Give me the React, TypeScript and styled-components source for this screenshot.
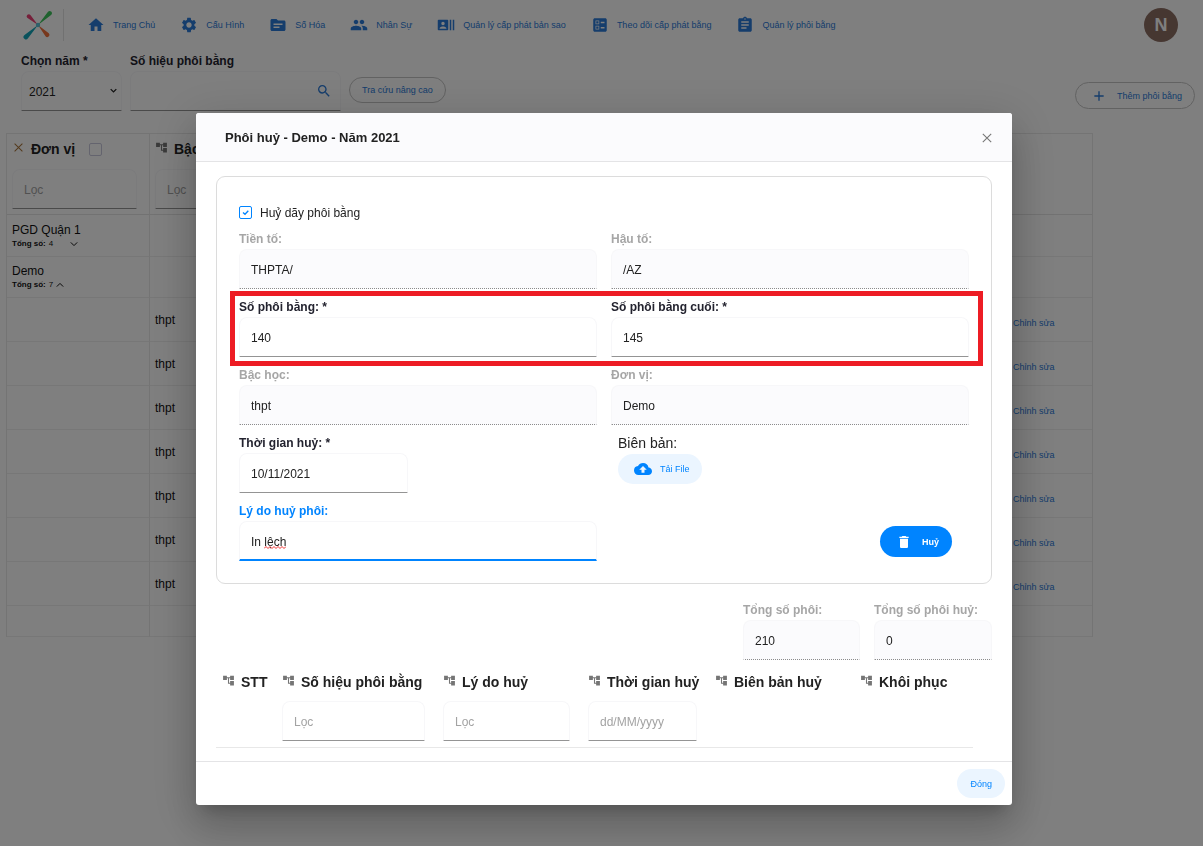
import React from "react";
import styled, { createGlobalStyle, css } from "styled-components";
import {
  MdAccountTree,
  MdAdd,
  MdAssignment,
  MdBackup,
  MdBallot,
  MdDelete,
  MdHome,
  MdPeople,
  MdRecentActors,
  MdSearch,
  MdSettings,
  MdSource,
} from "react-icons/md";

const blue = "#0084ff";
const navBlue = "#2a7ad8";

const GlobalStyle = createGlobalStyle`
  *, *::before, *::after { box-sizing: border-box; }
  body {
    margin: 0;
    background: #fff;
    color: #222;
    font-family: "Liberation Sans", Arial, sans-serif;
    font-size: 12px;
    line-height: 16px;
  }
  button, input, select { font: inherit; color: inherit; margin: 0; }
  a { text-decoration: none; }
`;

/* ---------- shared parts ---------- */

const Field = styled.div<{ $width?: number }>`
  display: flex;
  flex-direction: column;
  gap: 1px;
  min-width: 0;
  width: ${(p) => (p.$width ? `${p.$width}px` : "auto")};
`;

const Label = styled.label<{ $tone?: "muted" | "active" }>`
  font-weight: bold;
  line-height: 18px;
  white-space: nowrap;
  color: ${(p) => (p.$tone === "muted" ? "#a6a6a6" : p.$tone === "active" ? blue : "#23232f")};
`;

const control = css`
  display: block;
  width: 100%;
  height: 40px;
  padding: 2px 11px 0;
  background: #fff;
  border: 1px solid #f7f7f9;
  border-bottom-color: #949494;
  border-radius: 8px 8px 0 0;
  outline: none;
`;

const TextInput = styled.input<{ $active?: boolean }>`
  ${control}
  &::placeholder { color: #a3a3a3; opacity: 1; }
  &:disabled {
    background: #fbfbfd;
    border-bottom: 1px dotted #8c8c8c;
    color: #222;
  }
  ${(p) => p.$active && css`border-bottom: 2px solid ${blue};`}
`;

const Pill = styled.button<{ $kind: "outline" | "soft" | "solid"; $size: number }>`
  display: inline-flex;
  align-items: center;
  justify-content: center;
  height: ${(p) => p.$size}px;
  border-radius: 16px;
  font-size: 9px;
  line-height: 12px;
  white-space: nowrap;
  cursor: pointer;
  ${(p) =>
    p.$kind === "outline"
      ? css`background: transparent; border: 1px solid #c4c4c4; color: ${navBlue}; padding: 0 12px;`
      : p.$kind === "soft"
      ? css`background: #ebf5ff; border: 0; color: ${blue}; padding: 0 12px;`
      : css`background: ${blue}; border: 0; color: #fff; font-weight: bold; padding: 0 13px 0 16px;`}
`;

/* ---------- page behind the dialog ---------- */

const TopBar = styled.header`
  display: flex;
  align-items: center;
  height: 49px;
  padding: 0 25px 0 23px;
`;

const LogoSlot = styled.a`
  display: flex;
  padding-right: 10px;
  height: 32px;
  border-right: 1px solid #e2e2e2;
`;

const Nav = styled.nav`
  display: flex;
  flex: 1;
  gap: 25px;
  padding-left: 23px;
`;

const NavLink = styled.a`
  display: flex;
  align-items: center;
  gap: 8px;
  font-size: 9px;
  color: ${navBlue};
  white-space: nowrap;
  svg { flex: none; width: 18px; height: 18px; }
`;

const Avatar = styled.button`
  width: 34px;
  height: 34px;
  padding: 0;
  border: 0;
  border-radius: 50%;
  background: #8d6e63;
  color: #fff;
  font-size: 18px;
  font-weight: bold;
`;

const Filters = styled.form`
  display: flex;
  align-items: flex-start;
  gap: 8px;
  padding: 3px 8px 0 21px;
`;

const Select = styled.select`
  ${control}
  appearance: none;
  padding: 2px 7px 0;
`;

const ControlBox = styled.div`
  position: relative;
  > svg { position: absolute; pointer-events: none; }
`;

const PillSlot = styled.div<{ $end?: boolean }>`
  display: flex;
  margin-left: ${(p) => (p.$end ? "auto" : "0")};
  padding-top: ${(p) => (p.$end ? "30px" : "25px")};
  svg { width: 16px; height: 16px; margin: 0 10px 0 3px; }
`;

const UnitTable = styled.table`
  width: calc(100% - 116px);
  margin: 22px 0 0 6px;
  border-collapse: separate;
  border-spacing: 0;
  table-layout: fixed;
  border: 1px solid #e8e8e8;
  border-width: 1px 1px 0 1px;
  th, td {
    padding: 0 6px 0 5px;
    border-bottom: 1px solid #efefef;
    text-align: left;
    font-weight: normal;
  }
  th { border-bottom-color: #e4e4e4; }
  th:first-child, td:first-child { border-right: 1px solid #e8e8e8; }
  thead th { height: 81px; vertical-align: top; padding-top: 6px; padding-right: 12px; }
`;

const UnitRow = styled.tr<{ $height: number }>`
  td { height: ${(p) => p.$height}px; color: #111; }
`;

const ColTitle = styled.div<{ $gap: number }>`
  display: flex;
  align-items: center;
  gap: 6px;
  height: 18px;
  margin-bottom: ${(p) => p.$gap}px;
  font-size: 14px;
  font-weight: bold;
  line-height: 18px;
  white-space: nowrap;
  color: #222;
  svg { flex: none; width: 13px; height: 13px; color: #757575; margin-bottom: 4px; }
`;

const Tick = styled.input`
  appearance: none;
  flex: none;
  width: 13px;
  height: 13px;
  margin: 0;
  border: 1px solid #c9c9dd;
  border-radius: 2px;
  background: #fff;
  &:checked { border-color: ${blue}; }
`;

const TitleTick = styled(Tick)`
  margin-left: 8px;
`;

const UnitName = styled.div`
  line-height: 16px;
`;

const UnitTotal = styled.div<{ $open?: boolean }>`
  display: flex;
  align-items: center;
  font-size: 8px;
  line-height: 12px;
  gap: 3px;
  svg { width: 8px; height: 8px; margin-left: ${(p) => (p.$open ? "0" : "14px")}; }
`;

const RowLink = styled.a`
  display: block;
  padding-top: 6px;
  font-size: 9px;
  color: ${navBlue};
`;

/* ---------- dialog ---------- */

const Overlay = styled.div`
  position: fixed;
  inset: 0;
  display: flex;
  justify-content: center;
  align-items: flex-start;
  padding: 113px 0 0 5px;
  background: rgba(0, 0, 0, 0.5);
  overflow: auto;
`;

const Dialog = styled.section`
  width: 816px;
  max-width: 96%;
  background: #fff;
  border-radius: 3px;
  overflow: hidden;
  box-shadow: 0 11px 15px -7px rgba(0, 0, 0, 0.2), 0 24px 38px 3px rgba(0, 0, 0, 0.14),
    0 9px 46px 8px rgba(0, 0, 0, 0.12);
`;

const DialogHead = styled.header`
  display: flex;
  align-items: center;
  justify-content: space-between;
  height: 49px;
  padding: 2px 17px 0 29px;
  background: #fbfbfd;
  border-bottom: 1px solid #e4e4e6;
`;

const DialogTitle = styled.h2`
  margin: 0;
  font-size: 13px;
  line-height: 18px;
`;

const IconButton = styled.button`
  display: flex;
  padding: 3px;
  border: 0;
  background: none;
  color: #777;
`;

const DialogBody = styled.div`
  padding: 14px 20px 13px;
`;

const Panel = styled.form`
  display: flex;
  flex-direction: column;
  gap: 9px;
  padding: 27px 22px 22px;
  border: 1px solid #dcdcdc;
  border-radius: 9px;
`;

const CheckRow = styled.label`
  display: flex;
  align-items: center;
  gap: 8px;
  height: 17px;
`;

const CheckMark = styled.span`
  position: relative;
  display: flex;
  svg { position: absolute; inset: 0; pointer-events: none; }
`;

const PairRow = styled.div<{ $marked?: boolean }>`
  position: relative;
  display: grid;
  grid-template-columns: 1fr 1fr;
  gap: 14px;
  ${(p) =>
    p.$marked &&
    css`
      &::after {
        content: "";
        position: absolute;
        inset: -7px -14px -9px -9px;
        border: 5px solid #ed1c24;
        pointer-events: none;
      }
    `}
`;

const UploadGroup = styled.div`
  display: flex;
  flex-direction: column;
  align-items: flex-start;
  gap: 2px;
  padding-left: 7px;
  svg { width: 18px; height: 18px; margin: 0 8px 0 4px; }
`;

const UploadLabel = styled.div`
  font-size: 14px;
  line-height: 18px;
`;

const SubmitSlot = styled.div`
  display: flex;
  justify-content: flex-end;
  align-items: flex-end;
  padding: 0 17px 4px 0;
  svg { width: 16px; height: 16px; margin-right: 10px; }
`;

const Totals = styled.div`
  display: flex;
  justify-content: flex-end;
  gap: 14px;
  padding-top: 17px;
`;

const CancelTable = styled.table`
  width: 757px;
  max-width: 100%;
  margin-top: 13px;
  border-collapse: separate;
  border-spacing: 0;
  table-layout: fixed;
  th {
    padding: 0 12px 6px 6px;
    vertical-align: top;
    text-align: left;
    font-weight: normal;
    border-bottom: 1px solid #e8e8e8;
  }
`;

const DialogFoot = styled.footer`
  display: flex;
  justify-content: flex-end;
  padding: 7px;
  border-top: 1px solid #e4e4e6;
`;

const CloseButton = styled(Pill)`
  padding: 0 13px;
`;

/* ---------- drawings ---------- */

const Logo = () => (
  <svg width="30" height="32" viewBox="0 0 30 32" aria-hidden="true">
    <path d="M15 16 4.200 8.800a2.100 2.100 0 1 1 3.200-2.800z" fill="#ec3f74" />
    <path d="M15 16 25 2.800a2.200 2.200 0 1 1 3.400 3z" fill="#3dc45c" />
    <path d="M15 16 5 29.300a2.400 2.400 0 1 1-3.500-3.200z" fill="#12a5b8" />
    <path d="M15 16 25.800 24.300a2.200 2.200 0 1 1-3.300 2.900z" fill="#f0713a" />
    <circle cx="15" cy="16" r="2.200" fill="#5cc2d8" />
  </svg>
);

const Chevron = ({ up, size = 8, bold }: { up?: boolean; size?: number; bold?: boolean }) => (
  <svg width={size} height={size} viewBox="0 0 8 8" aria-hidden="true">
    <path
      d={up ? "M.8 5.600 4 2.400 7.200 5.600" : "M.8 2.400 4 5.600 7.200 2.400"}
      fill="none"
      stroke="currentColor"
      strokeWidth={bold ? 1.5 : 1}
    />
  </svg>
);

const Cross = ({ inset = 0, color }: { inset?: number; color: string }) => (
  <svg
    width="10"
    height="10"
    viewBox={`${-inset} ${-inset} ${10 + inset * 2} ${10 + inset * 2}`}
    aria-hidden="true"
  >
    <path d="M.8.8l8.400 8.400M9.200.8.8 9.200" fill="none" stroke={color} strokeWidth="1.100" />
  </svg>
);

const SelectArrow = styled.span`
  position: absolute;
  right: 5px;
  top: 16px;
  display: flex;
  pointer-events: none;
`;

const SearchButton = styled.button`
  position: absolute;
  right: 9px;
  top: 12px;
  display: flex;
  padding: 0;
  border: 0;
  background: none;
  color: ${navBlue};
  svg { width: 16px; height: 16px; }
`;

const SpellMark = styled.svg`
  left: 25px;
  top: 25px;
`;

/* ---------- data ---------- */

const navItems = [
  { label: "Trang Chủ", Icon: MdHome },
  { label: "Cấu Hình", Icon: MdSettings },
  { label: "Số Hóa", Icon: MdSource },
  { label: "Nhân Sự", Icon: MdPeople },
  { label: "Quản lý cấp phát bản sao", Icon: MdRecentActors },
  { label: "Theo dõi cấp phát bằng", Icon: MdBallot },
  { label: "Quản lý phôi bằng", Icon: MdAssignment },
];

const levelRows = ["thpt", "thpt", "thpt", "thpt", "thpt", "thpt", "thpt"];

const cancelColumns = [
  { title: "STT", width: 60 },
  { title: "Số hiệu phôi bằng", width: 161, filter: "Lọc" },
  { title: "Lý do huỷ", width: 145, filter: "Lọc" },
  { title: "Thời gian huỷ", width: 127, filter: "dd/MM/yyyy" },
  { title: "Biên bản huỷ", width: 145 },
  { title: "Khôi phục", width: 119 },
];

type TextFieldProps = {
  id: string;
  label: string;
  value: string;
  disabled?: boolean;
  active?: boolean;
  width?: number;
  children?: React.ReactNode;
};

const TextField = ({ id, label, value, disabled, active, width, children }: TextFieldProps) => (
  <Field $width={width}>
    <Label htmlFor={id} $tone={disabled ? "muted" : active ? "active" : undefined}>
      {label}
    </Label>
    <ControlBox>
      <TextInput id={id} defaultValue={value} disabled={disabled} $active={active} />
      {children}
    </ControlBox>
  </Field>
);

/* ---------- views ---------- */

const ManagePage = () => (
  <div>
    <TopBar>
      <LogoSlot href="#" aria-label="Trang Chủ">
        <Logo />
      </LogoSlot>
      <Nav>
        {navItems.map(({ label, Icon }) => (
          <NavLink href="#" key={label}>
            <Icon />
            {label}
          </NavLink>
        ))}
      </Nav>
      <Avatar type="button">N</Avatar>
    </TopBar>

    <Filters>
      <Field $width={101}>
        <Label htmlFor="year">Chọn năm *</Label>
        <ControlBox>
          <Select id="year" defaultValue="2021">
            <option>2021</option>
          </Select>
          <SelectArrow>
            <Chevron bold size={7} />
          </SelectArrow>
        </ControlBox>
      </Field>
      <Field $width={211}>
        <Label htmlFor="serial">Số hiệu phôi bằng</Label>
        <ControlBox>
          <TextInput id="serial" />
          <SearchButton type="button" aria-label="Số hiệu phôi bằng">
            <MdSearch />
          </SearchButton>
        </ControlBox>
      </Field>
      <PillSlot>
        <Pill type="button" $kind="outline" $size={26}>
          Tra cứu nâng cao
        </Pill>
      </PillSlot>
      <PillSlot $end>
        <Pill type="button" $kind="outline" $size={27}>
          <MdAdd />
          Thêm phôi bằng
        </Pill>
      </PillSlot>
    </Filters>

    <UnitTable>
      <colgroup>
        <col style={{ width: 143 }} />
        <col />
        <col style={{ width: 84 }} />
      </colgroup>
      <thead>
        <tr>
          <th>
            <ColTitle $gap={11}>
              <Cross inset={2} color="#a8743a" />
              Đơn vị
              <TitleTick type="checkbox" aria-label="Đơn vị" />
            </ColTitle>
            <TextInput placeholder="Lọc" aria-label="Đơn vị" />
          </th>
          <th>
            <ColTitle $gap={11}>
              <MdAccountTree />
              Bậc học
            </ColTitle>
            <TextInput placeholder="Lọc" aria-label="Bậc học" />
          </th>
          <th />
        </tr>
      </thead>
      <tbody>
        <UnitRow $height={42}>
          <td>
            <UnitName>PGD Quận 1</UnitName>
            <UnitTotal>
              <b>Tổng số:</b> 4 <Chevron />
            </UnitTotal>
          </td>
          <td />
          <td />
        </UnitRow>
        <UnitRow $height={41}>
          <td>
            <UnitName>Demo</UnitName>
            <UnitTotal $open>
              <b>Tổng số:</b> 7 <Chevron up />
            </UnitTotal>
          </td>
          <td />
          <td />
        </UnitRow>
        {levelRows.map((level, i) => (
          <UnitRow $height={44} key={i}>
            <td />
            <td>{level}</td>
            <td>
              <RowLink href="#">Chỉnh sửa</RowLink>
            </td>
          </UnitRow>
        ))}
        <UnitRow $height={31}>
          <td />
          <td />
          <td />
        </UnitRow>
      </tbody>
    </UnitTable>
  </div>
);

const CancelDialog = () => (
  <Overlay>
    <Dialog role="dialog" aria-labelledby="dialog-title">
      <DialogHead>
        <DialogTitle id="dialog-title">Phôi huỷ - Demo - Năm 2021</DialogTitle>
        <IconButton type="button" aria-label="Đóng">
          <Cross color="#777" />
        </IconButton>
      </DialogHead>

      <DialogBody>
        <Panel>
          <CheckRow>
            <CheckMark>
              <Tick type="checkbox" defaultChecked />
              <svg width="13" height="13" viewBox="0 0 13 13" aria-hidden="true">
                <path d="M4 6.500 6 8.300 9.300 4.800" fill="none" stroke={blue} strokeWidth="1.300" />
              </svg>
            </CheckMark>
            Huỷ dãy phôi bằng
          </CheckRow>
          <PairRow>
            <TextField id="prefix" label="Tiền tố:" value="THPTA/" disabled />
            <TextField id="suffix" label="Hậu tố:" value="/AZ" disabled />
          </PairRow>
          <PairRow $marked>
            <TextField id="first" label="Số phôi bằng: *" value="140" />
            <TextField id="last" label="Số phôi bằng cuối: *" value="145" />
          </PairRow>
          <PairRow>
            <TextField id="level" label="Bậc học:" value="thpt" disabled />
            <TextField id="unit" label="Đơn vị:" value="Demo" disabled />
          </PairRow>
          <PairRow>
            <TextField id="date" label="Thời gian huỷ: *" value="10/11/2021" width={169} />
            <UploadGroup>
              <UploadLabel>Biên bản:</UploadLabel>
              <Pill type="button" $kind="soft" $size={30}>
                <MdBackup />
                Tải File
              </Pill>
            </UploadGroup>
          </PairRow>
          <PairRow>
            <TextField id="reason" label="Lý do huỷ phôi:" value="In lệch" active>
              <SpellMark width="22" height="3" viewBox="0 0 22 3" aria-hidden="true">
                <path
                  d="M0 2.500 2 .5l2 2 2-2 2 2 2-2 2 2 2-2 2 2 2-2 2 2 2-2"
                  fill="none"
                  stroke="#f03030"
                />
              </SpellMark>
            </TextField>
            <SubmitSlot>
              <Pill type="submit" $kind="solid" $size={31}>
                <MdDelete />
                Huỷ
              </Pill>
            </SubmitSlot>
          </PairRow>
        </Panel>

        <Totals>
          <TextField id="total" label="Tổng số phôi:" value="210" disabled width={117} />
          <TextField id="cancelled" label="Tổng số phôi huỷ:" value="0" disabled width={118} />
        </Totals>

        <CancelTable>
          <colgroup>
            {cancelColumns.map((c) => (
              <col key={c.title} style={{ width: c.width }} />
            ))}
          </colgroup>
          <thead>
            <tr>
              {cancelColumns.map((c) => (
                <th key={c.title} scope="col">
                  <ColTitle $gap={10}>
                    <MdAccountTree />
                    {c.title}
                  </ColTitle>
                  {c.filter && <TextInput placeholder={c.filter} aria-label={c.title} />}
                </th>
              ))}
            </tr>
          </thead>
        </CancelTable>
      </DialogBody>

      <DialogFoot>
        <CloseButton type="button" $kind="soft" $size={29}>
          Đóng
        </CloseButton>
      </DialogFoot>
    </Dialog>
  </Overlay>
);

const App = () => (
  <>
    <GlobalStyle />
    <ManagePage />
    <CancelDialog />
  </>
);

export default App;
